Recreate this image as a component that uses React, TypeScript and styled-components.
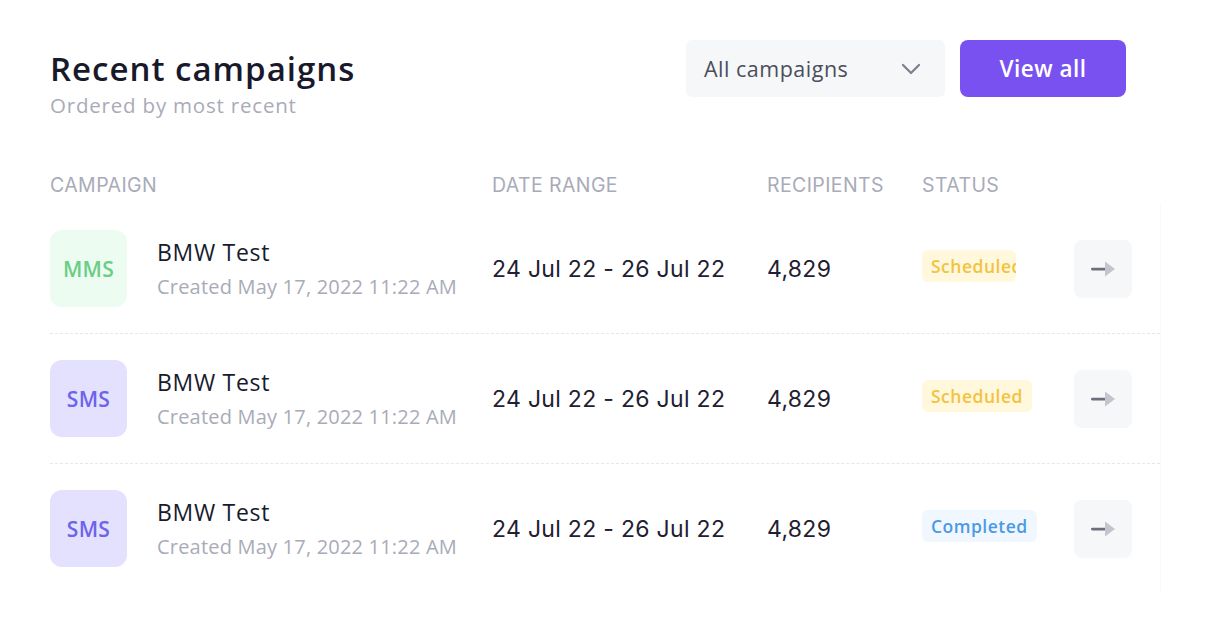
import styled, { createGlobalStyle } from "styled-components";

const GlobalStyle = createGlobalStyle`
  html, body {
    margin: 0;
    padding: 0;
    background: #ffffff;
  }
  body {
    font-family: "Open Sans", "Liberation Sans", sans-serif;
    -webkit-font-smoothing: antialiased;
  }
`;

const display = `"Open Sans", "Liberation Sans", sans-serif`;
const body = `Inter, "Liberation Sans", sans-serif`;

const Page = styled.div`
  width: 1218px;
  height: 632px;
  box-sizing: border-box;
  padding: 40px 58px 0 50px;
`;

const Header = styled.div`
  display: flex;
  justify-content: space-between;
  align-items: flex-start;
  padding-right: 34px;
`;

const TitleBlock = styled.div`
  padding-top: 9px;
`;

const Title = styled.h2`
  margin: 0;
  font-family: ${display};
  font-size: 33px;
  line-height: 40px;
  font-weight: 600;
  color: #181a2c;
  letter-spacing: 1px;
`;

const Subtitle = styled.p`
  margin: 4px 0 0;
  font-family: ${display};
  font-size: 20.5px;
  line-height: 24px;
  color: #a9abb8;
  letter-spacing: 0.8px;
`;

const Actions = styled.div`
  display: flex;
  gap: 15px;
`;

const Select = styled.button`
  width: 259px;
  height: 57px;
  border: none;
  border-radius: 6px;
  background: #f6f7f9;
  display: flex;
  align-items: center;
  justify-content: space-between;
  padding: 0 24px 0 18px;
  font-family: ${display};
  font-size: 21.5px;
  letter-spacing: 0.5px;
  color: #4b4e5c;
  cursor: pointer;
`;

const PrimaryButton = styled.button`
  width: 166px;
  height: 57px;
  border: none;
  border-radius: 8px;
  background: #7951f1;
  color: #ffffff;
  font-family: ${display};
  font-size: 22.5px;
  letter-spacing: 0.5px;
  font-weight: 600;
  cursor: pointer;
`;

const Grid = styled.div`
  display: grid;
  grid-template-columns: 442px 275px 155px 152px 58px 28px;
  align-items: center;
`;

const HeadRow = styled(Grid)`
  margin-top: 56px;
  height: 22px;
`;

const HeadCell = styled.div`
  font-family: ${body};
  font-size: 19.5px;
  color: #a9abb8;
  letter-spacing: 0.4px;
  text-transform: uppercase;
`;

const Table = styled.div`
  margin-top: 9px;
  border-right: 1px solid #fafafb;
  width: 1110px;
`;

const Row = styled(Grid)<{ $last?: boolean }>`
  padding: 26px 0 26px;
  border-bottom: ${(p) => (p.$last ? "1px solid transparent" : "1px dashed #e6e7eb")};
`;

const Campaign = styled.div`
  display: flex;
  align-items: center;
  gap: 30px;
`;

const TypeBadge = styled.div<{ $bg: string; $fg: string }>`
  width: 77px;
  height: 77px;
  border-radius: 12px;
  background: ${(p) => p.$bg};
  color: ${(p) => p.$fg};
  display: flex;
  align-items: center;
  justify-content: center;
  font-family: ${display};
  font-weight: 600;
  font-size: 21px;
  letter-spacing: 0.3px;
`;

const Name = styled.div`
  font-family: ${display};
  font-size: 23px;
  line-height: 30px;
  font-weight: 500;
  color: #181a2c;
  letter-spacing: 0.7px;
`;

const Created = styled.div`
  font-family: ${display};
  font-size: 20px;
  line-height: 28px;
  color: #a9abb8;
  letter-spacing: 0.2px;
  margin-top: 6px;
`;

const Value = styled.div`
  font-family: ${body};
  font-size: 23px;
  letter-spacing: 0.3px;
  color: #1f2031;
`;

const Status = styled.span<{ $bg: string; $fg: string; $max?: number }>`
  display: inline-block;
  box-sizing: border-box;
  max-width: ${(p) => (p.$max ? `${p.$max}px` : "none")};
  overflow: hidden;
  white-space: nowrap;
  padding: 4px 9px;
  border-radius: 6px;
  background: ${(p) => p.$bg};
  color: ${(p) => p.$fg};
  font-family: ${display};
  font-size: 17.5px;
  letter-spacing: 0.5px;
  line-height: 24px;
  font-weight: 600;
`;

const ArrowButton = styled.button`
  width: 58px;
  height: 58px;
  border: none;
  border-radius: 8px;
  background: #f6f7f9;
  display: flex;
  align-items: center;
  justify-content: center;
  cursor: pointer;
  padding: 0;
`;

const Chevron = () => (
  <svg width="20" height="12" viewBox="0 0 20 12" fill="none">
    <path d="M2 2l8 8 8-8" stroke="#7c7f8c" strokeWidth="2.2" strokeLinecap="round" strokeLinejoin="round" />
  </svg>
);

const Arrow = () => (
  <svg width="26" height="20" viewBox="0 0 26 20">
    <rect x="1" y="8.8" width="15" height="2.6" rx="1.3" fill="#6d707c" />
    <path d="M15 2.5L25 10 15 17.5z" fill="#c3c5cc" />
  </svg>
);

type Campaign = {
  type: "MMS" | "SMS";
  status: "Scheduled" | "Completed";
  clip?: number;
};

// first row's status pill is cut short in the source design
const rows: Campaign[] = [
  { type: "MMS", status: "Scheduled", clip: 94 },
  { type: "SMS", status: "Scheduled" },
  { type: "SMS", status: "Completed" },
];

const typeColors = {
  MMS: { bg: "#ecfcf0", fg: "#6bcd86" },
  SMS: { bg: "#e3e1fd", fg: "#6e63ea" },
};

const statusColors = {
  Scheduled: { bg: "#fff8dc", fg: "#f3c33f" },
  Completed: { bg: "#f1f7fe", fg: "#4b9ae6" },
};

export default function App() {
  return (
    <>
      <GlobalStyle />
      <Page>
        <Header>
          <TitleBlock>
            <Title>Recent campaigns</Title>
            <Subtitle>Ordered by most recent</Subtitle>
          </TitleBlock>
          <Actions>
            <Select>
              All campaigns
              <Chevron />
            </Select>
            <PrimaryButton>View all</PrimaryButton>
          </Actions>
        </Header>

        <HeadRow>
          <HeadCell>Campaign</HeadCell>
          <HeadCell>Date range</HeadCell>
          <HeadCell>Recipients</HeadCell>
          <HeadCell>Status</HeadCell>
        </HeadRow>

        <Table>
          {rows.map((r, i) => (
            <Row key={i} $last={i === rows.length - 1}>
              <Campaign>
                <TypeBadge $bg={typeColors[r.type].bg} $fg={typeColors[r.type].fg}>
                  {r.type}
                </TypeBadge>
                <div>
                  <Name>BMW Test</Name>
                  <Created>Created May 17, 2022 11:22 AM</Created>
                </div>
              </Campaign>
              <Value>24 Jul 22 - 26 Jul 22</Value>
              <Value>4,829</Value>
              <div>
                <Status
                  $bg={statusColors[r.status].bg}
                  $fg={statusColors[r.status].fg}
                  $max={r.clip}
                >
                  {r.status}
                </Status>
              </div>
              <ArrowButton>
                <Arrow />
              </ArrowButton>
            </Row>
          ))}
        </Table>
      </Page>
    </>
  );
}
